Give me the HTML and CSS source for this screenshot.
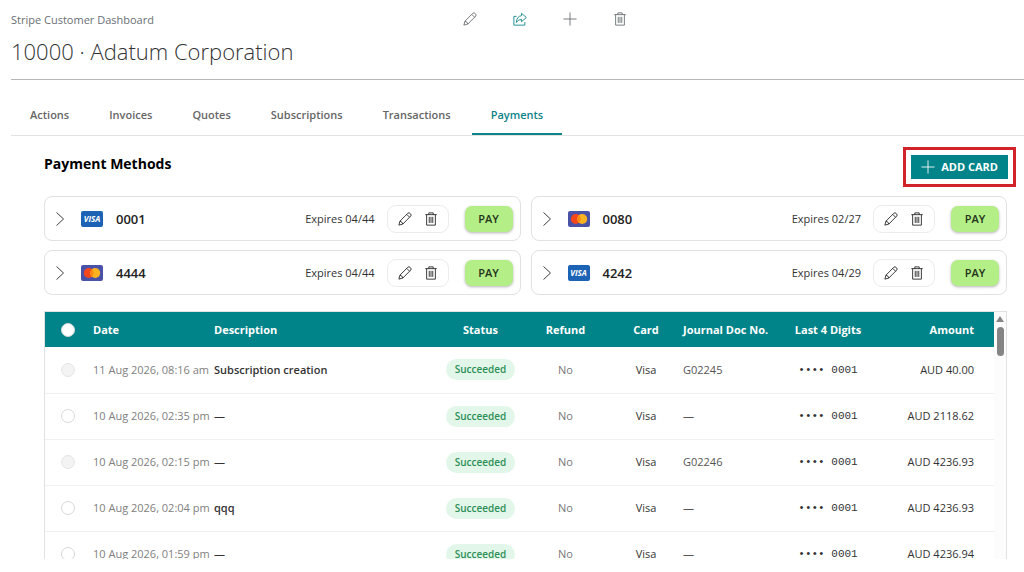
FILE: index.html
```html
<!DOCTYPE html>
<html lang="en">
<head>
<meta charset="utf-8">
<title>10000 · Adatum Corporation</title>
<link rel="stylesheet" href="styles.css">
</head>
<body>
<svg class="sprite" aria-hidden="true">
  <symbol id="pencil" viewBox="0 0 16 16"><path d="M1 15l1.200-4.500L11.300 1.400q1.200-1 2.400.100l.8.8q1.100 1.200 0 2.400L5.500 13.800zM10 2.700l3.300 3.300M2.200 10.500q2.800.500 3.300 3.300"/></symbol>
  <symbol id="share" viewBox="0 0 16 16"><path d="M4 5H1v10h12.500v-3.500M9.700 1.500l5.600 4.800-5.600 4.800V8.500Q6 8.300 3.800 12q.6-7.200 5.900-7.800z"/></symbol>
  <symbol id="plus" viewBox="0 0 16 16"><path d="M8 .5v15M.5 8h15"/></symbol>
  <symbol id="trash" viewBox="0 0 16 16"><path d="M1.500 3h13M5.500 3V1h5v2M3 3v12h10V3M6 5.500v7M8 5.500v7M10 5.500v7"/></symbol>
  <symbol id="chevron" viewBox="0 0 16 16"><path d="M4 .5l8 7.500-8 7.500"/></symbol>
  <symbol id="mastercard" viewBox="0 0 22 16"><rect width="22" height="16" rx="2" fill="#4a52a8"/><circle cx="7.800" cy="8" r="5" fill="#f4471c"/><circle cx="14.200" cy="8" r="5" fill="#fbb321"/><path d="M11 4.200a5 5 0 0 1 0 7.600 5 5 0 0 1 0-7.600z" fill="#ff8a12"/></symbol>
</svg>
<header class="page-header">
  <span class="crumb">Stripe Customer Dashboard</span>
  <div class="toolbar">
    <button class="icon-button" aria-label="Edit"><svg class="icon"><use href="#pencil"/></svg></button>
    <button class="icon-button accent" aria-label="Share"><svg class="icon"><use href="#share"/></svg></button>
    <button class="icon-button" aria-label="New"><svg class="icon"><use href="#plus"/></svg></button>
    <button class="icon-button" aria-label="Delete"><svg class="icon"><use href="#trash"/></svg></button>
  </div>
  <h1 class="title">10000 · Adatum Corporation</h1>
</header>
<nav class="tabs">
  <a class="tab" href="#actions">Actions</a>
  <a class="tab" href="#invoices">Invoices</a>
  <a class="tab" href="#quotes">Quotes</a>
  <a class="tab" href="#subscriptions">Subscriptions</a>
  <a class="tab" href="#transactions">Transactions</a>
  <a class="tab active" href="#payments" aria-current="page">Payments</a>
</nav>
<main class="content">
  <div class="section-head">
    <h2 class="section-title">Payment Methods</h2>
    <div class="highlight"><button class="add-card"><svg class="icon"><use href="#plus"/></svg>ADD CARD</button></div>
  </div>
  <section class="cards" aria-label="Saved cards">
    <article class="card">
      <button class="icon-button dark" aria-label="Expand"><svg class="icon"><use href="#chevron"/></svg></button>
      <span class="brand visa">VISA</span>
      <strong class="last4">0001</strong><span class="expiry">Expires 04/44</span>
      <div class="actions"><button class="icon-button dark" aria-label="Edit card"><svg class="icon"><use href="#pencil"/></svg></button><button class="icon-button dark" aria-label="Delete card"><svg class="icon"><use href="#trash"/></svg></button></div>
      <button class="pay">PAY</button>
    </article>
    <article class="card">
      <button class="icon-button dark" aria-label="Expand"><svg class="icon"><use href="#chevron"/></svg></button>
      <svg class="brand" role="img" aria-label="Mastercard"><use href="#mastercard"/></svg>
      <strong class="last4">0080</strong><span class="expiry">Expires 02/27</span>
      <div class="actions"><button class="icon-button dark" aria-label="Edit card"><svg class="icon"><use href="#pencil"/></svg></button><button class="icon-button dark" aria-label="Delete card"><svg class="icon"><use href="#trash"/></svg></button></div>
      <button class="pay">PAY</button>
    </article>
    <article class="card">
      <button class="icon-button dark" aria-label="Expand"><svg class="icon"><use href="#chevron"/></svg></button>
      <svg class="brand" role="img" aria-label="Mastercard"><use href="#mastercard"/></svg>
      <strong class="last4">4444</strong><span class="expiry">Expires 04/44</span>
      <div class="actions"><button class="icon-button dark" aria-label="Edit card"><svg class="icon"><use href="#pencil"/></svg></button><button class="icon-button dark" aria-label="Delete card"><svg class="icon"><use href="#trash"/></svg></button></div>
      <button class="pay">PAY</button>
    </article>
    <article class="card">
      <button class="icon-button dark" aria-label="Expand"><svg class="icon"><use href="#chevron"/></svg></button>
      <span class="brand visa">VISA</span>
      <strong class="last4">4242</strong><span class="expiry">Expires 04/29</span>
      <div class="actions"><button class="icon-button dark" aria-label="Edit card"><svg class="icon"><use href="#pencil"/></svg></button><button class="icon-button dark" aria-label="Delete card"><svg class="icon"><use href="#trash"/></svg></button></div>
      <button class="pay">PAY</button>
    </article>
  </section>
  <div class="table-frame">
    <div class="table-scroll">
      <table class="payments">
        <colgroup><col class="c-pick"><col class="c-date"><col class="c-desc"><col class="c-status"><col class="c-refund"><col class="c-card"><col class="c-doc"><col class="c-last4"><col class="c-amount"></colgroup>
        <thead>
          <tr><th class="mid"><input type="checkbox" class="pick" aria-label="Select all"></th><th>Date</th><th>Description</th><th class="mid">Status</th><th class="mid">Refund</th><th class="mid">Card</th><th>Journal Doc No.</th><th class="mid">Last 4 Digits</th><th class="end">Amount</th></tr>
        </thead>
        <tbody>
          <tr><td class="mid"><input type="checkbox" class="pick" aria-label="Select payment" disabled></td><td class="muted">11 Aug 2026, 08:16 am</td><td class="desc">Subscription creation</td><td class="mid"><span class="badge">Succeeded</span></td><td class="mid refund">No</td><td class="mid">Visa</td><td class="doc">G02245</td><td class="mid digits">•••• 0001</td><td class="end">AUD 40.00</td></tr>
          <tr><td class="mid"><input type="checkbox" class="pick" aria-label="Select payment"></td><td class="muted">10 Aug 2026, 02:35 pm</td><td class="desc">—</td><td class="mid"><span class="badge">Succeeded</span></td><td class="mid refund">No</td><td class="mid">Visa</td><td class="doc">—</td><td class="mid digits">•••• 0001</td><td class="end">AUD 2118.62</td></tr>
          <tr><td class="mid"><input type="checkbox" class="pick" aria-label="Select payment" disabled></td><td class="muted">10 Aug 2026, 02:15 pm</td><td class="desc">—</td><td class="mid"><span class="badge">Succeeded</span></td><td class="mid refund">No</td><td class="mid">Visa</td><td class="doc">G02246</td><td class="mid digits">•••• 0001</td><td class="end">AUD 4236.93</td></tr>
          <tr><td class="mid"><input type="checkbox" class="pick" aria-label="Select payment"></td><td class="muted">10 Aug 2026, 02:04 pm</td><td class="desc">qqq</td><td class="mid"><span class="badge">Succeeded</span></td><td class="mid refund">No</td><td class="mid">Visa</td><td class="doc">—</td><td class="mid digits">•••• 0001</td><td class="end">AUD 4236.93</td></tr>
          <tr><td class="mid"><input type="checkbox" class="pick" aria-label="Select payment"></td><td class="muted">10 Aug 2026, 01:59 pm</td><td class="desc">—</td><td class="mid"><span class="badge">Succeeded</span></td><td class="mid refund">No</td><td class="mid">Visa</td><td class="doc">—</td><td class="mid digits">•••• 0001</td><td class="end">AUD 4236.94</td></tr>
        </tbody>
      </table>
    </div>
    <div class="scrollbar" aria-hidden="true"><span class="arrow"></span><span class="thumb"></span></div>
  </div>
</main>
</body>
</html>
```
FILE: styles.css
```css
* { box-sizing: border-box; }
body {
  margin: 0;
  height: 100vh;
  padding: 12px 0 13px 11px;
  display: flex;
  flex-direction: column;
  overflow: hidden;
  background: #fff;
  color: #333;
  font: 11px/16px "Open Sans", "Noto Sans", sans-serif;
}
.sprite { position: absolute; width: 0; height: 0; }
button { font: inherit; border: 0; background: none; padding: 0; cursor: pointer; }
.icon { display: block; width: 14px; height: 14px; fill: none; stroke: currentColor; stroke-width: 1; }
.icon-button { color: #666c70; }
.icon-button.accent { color: #0e8389; }
.icon-button.dark { color: #222; }

.page-header {
  position: relative;
  border-bottom: 1px solid #b8b8b8;
  padding-bottom: 12px;
}
.crumb { display: block; color: #6a7075; }
.toolbar { position: absolute; top: 0; left: 452px; display: flex; gap: 36px; }
.title { margin: 7px 0 0; font-size: 22px; line-height: 32px; font-weight: 300; color: #333; }

.tabs { display: flex; gap: 2px; margin-top: 15px; border-bottom: 1px solid #e2e2e2; }
.tab {
  padding: 12px 19px 10px;
  border-bottom: 2px solid transparent;
  color: #666;
  font-weight: 600;
  text-decoration: none;
}
.tab.active { color: #0e8389; border-color: #0e8389; }

.content {
  flex: 1;
  min-height: 0;
  display: flex;
  flex-direction: column;
  padding: 11px 17px 0 33px;
}
.section-head { display: flex; justify-content: space-between; align-items: flex-start; margin-right: -9px; }
.section-title { margin: 9px 0 0; font-size: 14px; line-height: 16px; font-weight: 700; color: #000; }
.highlight { border: 3px solid #d2232a; padding: 5px; }
.add-card {
  display: flex;
  align-items: center;
  gap: 6px;
  height: 24px;
  padding: 0 10px;
  background: #008489;
  color: #fff;
  font-weight: 700;
}

.cards { display: grid; grid-template-columns: 1fr 1fr; gap: 9px 10px; margin-top: 9px; }
.card {
  display: flex;
  align-items: center;
  height: 45px;
  padding: 0 7px 0 8px;
  border: 1px solid #e0e1e3;
  border-radius: 8px;
}
.brand { width: 22px; height: 16px; margin: 0 13px 0 14px; }
.visa {
  border-radius: 2px;
  background: #1c62b5;
  color: #fff;
  font-size: 8px;
  font-style: italic;
  font-weight: 700;
  text-align: center;
}
.last4 { flex: 1; font-size: 13px; font-weight: 600; color: #222; }
.expiry { color: #333; }
.actions { display: flex; gap: 12px; margin: 0 16px 0 12px; padding: 6px 10px; border: 1px solid #ececee; border-radius: 9px; }
.pay {
  width: 48px;
  height: 26px;
  border-radius: 7px;
  background: #b4ee87;
  color: #24331b;
  font-weight: 600;
  box-shadow: 0 1px 3px rgba(0, 0, 0, .3);
}

.table-frame { flex: 1; min-height: 0; display: flex; margin-top: 16px; border: 1px solid #e0e1e3; border-bottom: 0; }
.table-scroll { flex: 1; overflow: hidden; }
.payments { width: 100%; table-layout: fixed; border-collapse: collapse; }
.c-pick { width: 45px; }
.c-date { width: 121px; }
.c-desc { width: 231px; }
.c-status { width: 77px; }
.c-refund { width: 93px; }
.c-card { width: 68px; }
.c-doc { width: 98px; }
.c-last4 { width: 100px; }
th { height: 35px; padding: 0 0 0 3px; background: #008489; color: #fff; font-weight: 700; text-align: left; white-space: nowrap; }
td { height: 46px; padding: 0 0 0 3px; border-bottom: 1px solid #f0f0f0; white-space: nowrap; }
.mid { text-align: center; padding: 0; }
.end { text-align: right; padding-right: 20px; }
.pick { appearance: none; display: block; width: 14px; height: 14px; margin: 0 auto; border: 1px solid #d8d8d8; border-radius: 50%; background: #fff; }
.pick:disabled { background: #f3f3f3; border-color: #e6e6e6; }
.muted { color: #808080; }
.desc { font-weight: 600; }
.refund { color: #777; font-weight: 500; }
.doc { color: #555; }
.badge { display: inline-block; padding: 3px 9px; border-radius: 11px; background: #e3f6ea; color: #2c8f55; font-size: 10px; line-height: 15px; font-weight: 600; }
.digits { font-family: "Liberation Mono", monospace; }
.scrollbar { width: 12px; padding-top: 4px; display: flex; flex-direction: column; align-items: center; gap: 5px; background: #fcfcfc; }
.arrow { border: 4px solid transparent; border-top: 0; border-bottom: 6px solid #858585; }
.thumb { width: 7px; height: 29px; border-radius: 4px; background: #858585; }
```
